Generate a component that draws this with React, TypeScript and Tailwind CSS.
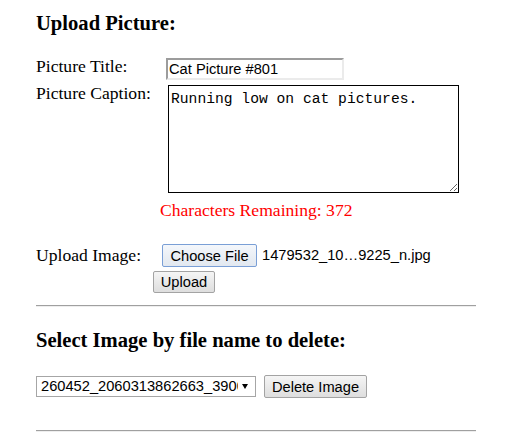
const sans = "font-['Liberation_Sans',Arial,sans-serif]";

function Button({ label, className }: { label: string; className: string }) {
  return (
    <button
      type="button"
      className={`flex items-center justify-center rounded-[2px] border bg-linear-to-b text-[14.67px] text-black ${sans} ${className}`}
    >
      {label}
    </button>
  );
}

export default function App() {
  return (
    <div className="h-[445px] w-[515px] overflow-hidden bg-white font-['Liberation_Serif','Times_New_Roman',serif] text-black">
      <div className="w-[476px] pl-[36px] pt-[11px]">
        <h3 className="text-[20.6px] font-bold leading-[24px]">Upload Picture:</h3>

        <div className="mt-[21px] grid grid-cols-[130px_auto] items-start gap-y-[3px] text-[17.6px] leading-[20px]">
          <label>Picture Title:</label>
          <input
            defaultValue="Cat Picture #801"
            className={`mt-[2px] h-[22px] w-[178px] border-2 border-t-[#9c9c9c] border-l-[#9c9c9c] border-r-[#ebebeb] border-b-[#ebebeb] px-[1px] text-[14.67px] outline-none ${sans}`}
          />
          <label>Picture Caption:</label>
          <textarea
            defaultValue="Running low on cat pictures."
            className="ml-[2px] mt-[2px] h-[108px] w-[291px] border border-black p-[2px] font-['Liberation_Mono','Courier_New',monospace] text-[14.67px] leading-normal outline-none"
          />
        </div>

        <p className="ml-[124px] mt-[7px] text-[17.6px] leading-[20px] text-[#ff0000]">
          Characters Remaining: 372
        </p>

        <div className="mt-[24px] flex items-start text-[17.6px] leading-[20px]">
          <span className="mt-[1px] w-[126px]">Upload Image:</span>
          <Button
            label="Choose File"
            className="h-[23px] w-[95px] border-[#7a9fd6] from-[#f4f7fb] to-[#e2e8f0]"
          />
          <span className={`ml-[5px] mt-[3px] text-[14.67px] leading-[17px] ${sans}`}>
            1479532_10…9225_n.jpg
          </span>
        </div>

        <Button
          label="Upload"
          className="ml-[117px] mt-[4px] h-[22px] w-[62px] border-[#a3a3a3] from-[#f5f5f5] to-[#dedede]"
        />

        <hr className="mt-[12px] h-0 w-[440px] border-0 border-t border-b border-t-[#a0a0a0] border-b-[#eeeeee]" />

        <h3 className="mt-[21px] text-[20.6px] font-bold leading-[24px]">
          Select Image by file name to delete:
        </h3>

        <div className="mt-[23px] flex items-start">
          <div
            className={`mt-[1px] flex h-[21px] w-[220px] items-center border border-[#a6a6a6] bg-white pl-[4px] text-[14.67px] ${sans}`}
          >
            <span className="w-[197px] overflow-hidden whitespace-nowrap leading-[17px]">
              260452_2060313862663_3900452_n.jpg
            </span>
            <svg width="6" height="5" viewBox="0 0 6 5" className="ml-[4px]">
              <path d="M0 0h6L3 5z" fill="#000" />
            </svg>
          </div>
          <Button
            label="Delete Image"
            className="ml-[8px] h-[23px] w-[103px] border-[#a3a3a3] from-[#f5f5f5] to-[#dedede]"
          />
        </div>

        <hr className="mt-[32px] h-0 w-[440px] border-0 border-t border-b border-t-[#a0a0a0] border-b-[#eeeeee]" />
      </div>
    </div>
  );
}
